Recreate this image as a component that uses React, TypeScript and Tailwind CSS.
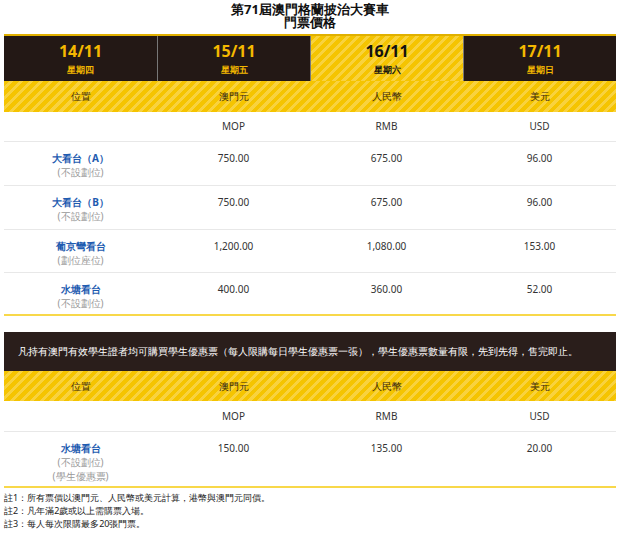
import React from "react";

const stripe =
  "bg-[repeating-linear-gradient(135deg,#f5c400_0px,#f5c400_4px,#f8d23e_4px,#f8d23e_7px)]";

const rows = [
  { n: "大看台（A）", s: ["(不設劃位)"], v: ["750.00", "675.00", "96.00"], h: "h-[44px]" },
  { n: "大看台（B）", s: ["(不設劃位)"], v: ["750.00", "675.00", "96.00"], h: "h-[44px]" },
  { n: "葡京彎看台", s: ["(劃位座位)"], v: ["1,200.00", "1,080.00", "153.00"], h: "h-[43px]" },
  { n: "水塘看台", s: ["(不設劃位)"], v: ["400.00", "360.00", "52.00"], h: "h-[43px]" },
];

function HeadRow({ h }: { h: string }) {
  return (
    <div className={`grid grid-cols-4 ${h} items-center text-center text-[10px] text-[#3a2a10] ${stripe}`}>
      <div>位置</div>
      <div>澳門元</div>
      <div>人民幣</div>
      <div>美元</div>
    </div>
  );
}

function CurRow({ h }: { h: string }) {
  return (
    <div className={`grid grid-cols-4 ${h} items-center text-center text-[10px] text-[#333] border-b border-[#e8e8e8]`}>
      <div></div>
      <div>MOP</div>
      <div>RMB</div>
      <div>USD</div>
    </div>
  );
}

function Row({ r, last, h }: { r: { n: string; s: string[]; v: string[] }; last: boolean; h: string }) {
  return (
    <div className={`grid grid-cols-4 ${h} pt-[9px] text-center text-[10px] leading-[14px] ${last ? "border-b-2 border-[#f8d84a]" : "border-b border-[#e8e8e8]"}`}>
      <div>
        <div className="text-[#1e5bb0] font-bold">{r.n}</div>
        {r.s.map((x) => (
          <div key={x} className="text-[#999]">{x}</div>
        ))}
      </div>
      {r.v.map((x, i) => (
        <div key={i} className="text-[#333]">{x}</div>
      ))}
    </div>
  );
}

export default function App() {
  const days = [
    ["14/11", "星期四"],
    ["15/11", "星期五"],
    ["16/11", "星期六"],
    ["17/11", "星期日"],
  ];
  return (
    <div className="w-[620px] h-[535px] bg-white font-['Liberation_Sans','Noto_Sans_CJK_TC',sans-serif]">
      <div className="pt-[3px] text-center text-[13px] font-bold leading-[13px] text-[#111]">
        <div>第71屆澳門格蘭披治大賽車</div>
        <div>門票價格</div>
      </div>
      <div className="mx-[4px] mt-[5px]">
        <div className="grid grid-cols-4 h-[47px] border-t-2 border-[#e0b000]">
          {days.map(([d, w], i) => (
            <div
              key={d}
              className={`flex flex-col items-center justify-center ${i === 2 ? stripe + " text-[#111]" : "bg-[#231815] text-[#f5b800]"} ${i > 0 ? "border-l border-[#777]" : ""}`}
            >
              <div className="text-[16px] font-bold leading-[20px]">{d}</div>
              <div className="text-[9px] font-bold mt-[2px]">{w}</div>
            </div>
          ))}
        </div>
        <HeadRow h="h-[31px]" />
        <CurRow h="h-[30px]" />
        {rows.map((r, i) => (
          <Row key={i} r={r} last={i === 3} h={r.h} />
        ))}
        <div className="mt-[16px] h-[39px] bg-[#2a1e1b] flex items-center px-[14px] text-[10px] text-white">
          凡持有澳門有效學生證者均可購買學生優惠票（每人限購每日學生優惠票一張），學生優惠票數量有限，先到先得，售完即止。
        </div>
        <HeadRow h="h-[30px]" />
        <CurRow h="h-[31px]" />
        <Row r={{ n: "水塘看台", s: ["(不設劃位)", "(學生優惠票)"], v: ["150.00", "135.00", "20.00"] }} last={true} h="h-[56px]" />
      </div>
      <div className="pl-[4px] pt-[3px] text-[9px] leading-[13px] text-[#222]">
        <div>註1：所有票價以澳門元、人民幣或美元計算，港幣與澳門元同價。</div>
        <div>註2：凡年滿2歲或以上需購票入場。</div>
        <div>註3：每人每次限購最多20張門票。</div>
      </div>
    </div>
  );
}
